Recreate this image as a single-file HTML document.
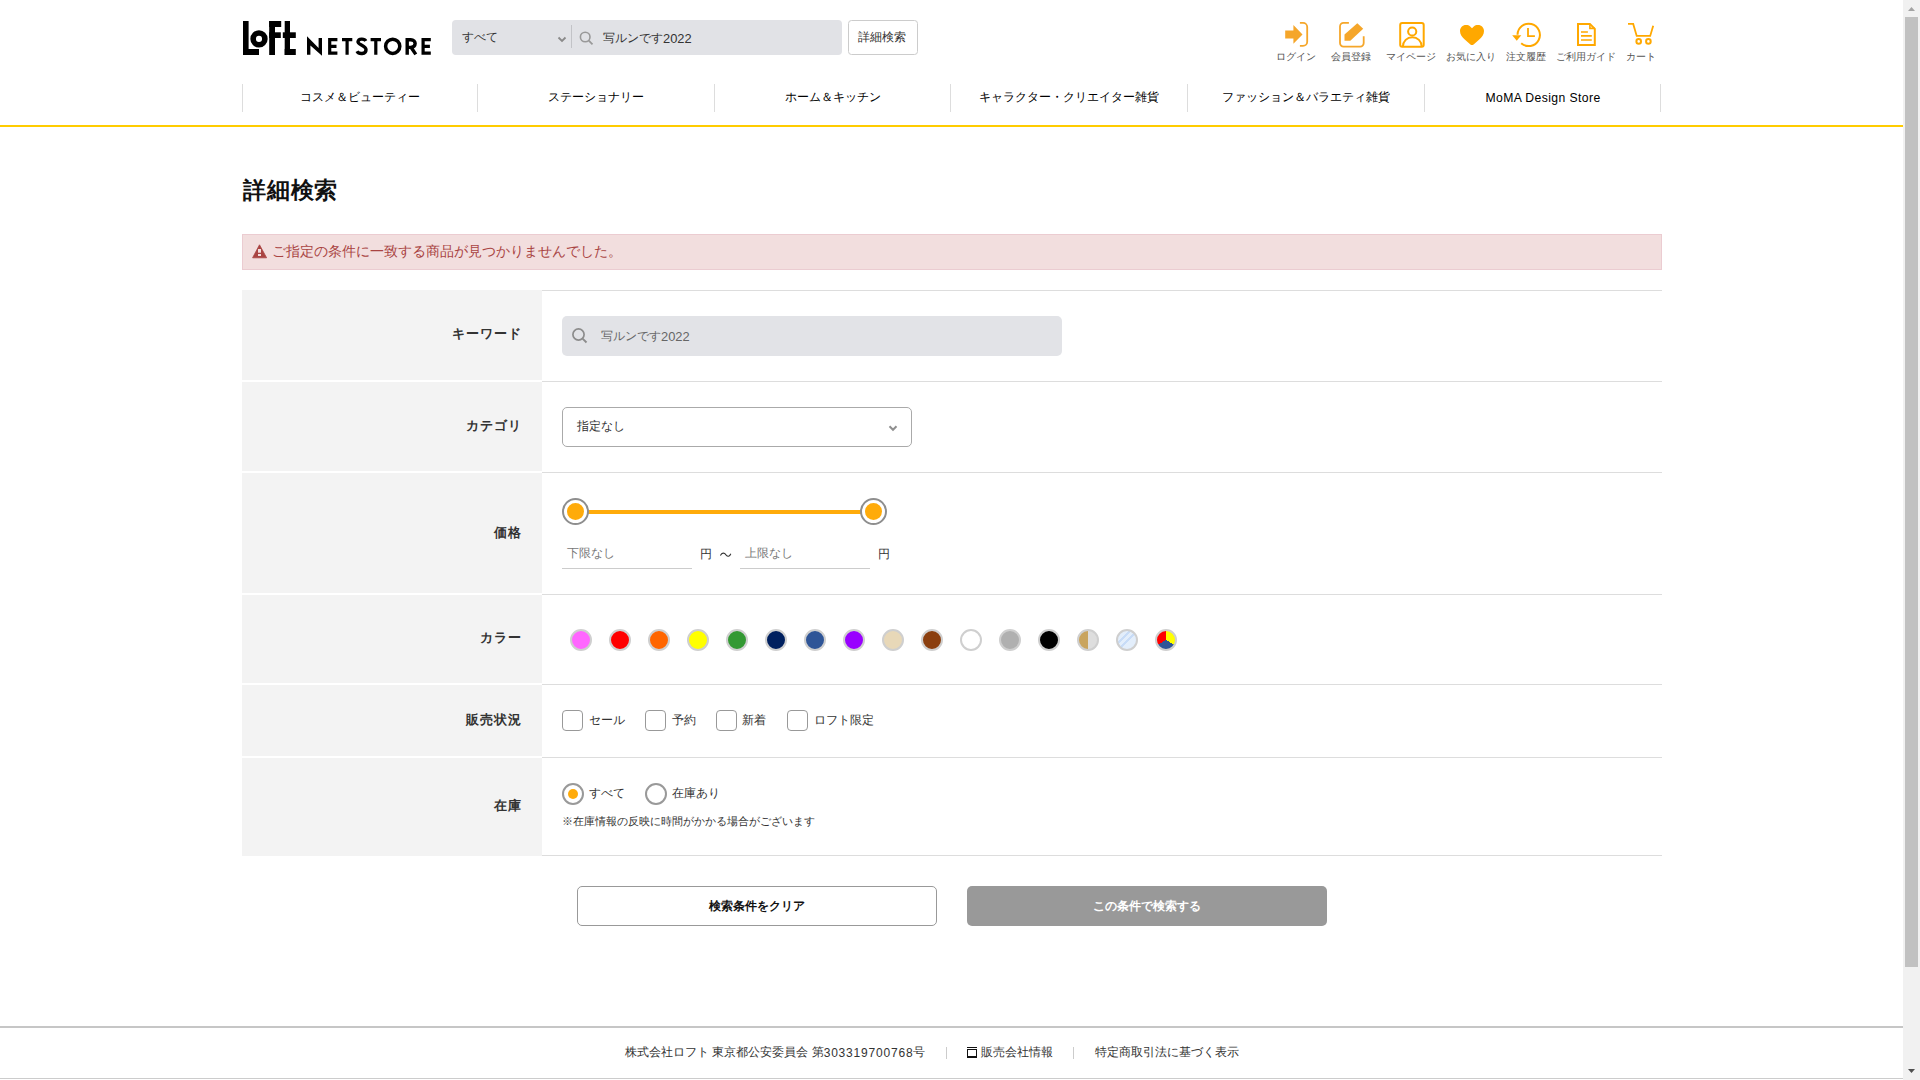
<!DOCTYPE html>
<html lang="ja">
<head>
<meta charset="utf-8">
<style>
*{box-sizing:border-box;margin:0;padding:0}
html,body{width:1920px;height:1080px;overflow:hidden;background:#fff}
body{position:relative;font-family:"Liberation Sans",sans-serif;color:#333}
.a{position:absolute;white-space:nowrap}
.c{text-align:center}
.lbl{position:absolute;left:242px;width:300px;background:#f3f3f3}
.lbl span{position:absolute;right:20px;font-size:13px;letter-spacing:1px;font-weight:bold;color:#333;line-height:14px}
.ln{position:absolute;left:542px;width:1120px;height:1px;background:#ddd}
.sw{position:absolute;top:629px;width:22px;height:22px;border-radius:50%;border:2px solid #cfcfcf}
.cb{position:absolute;top:710px;width:21px;height:21px;border:1px solid #999;border-radius:4px;background:#fff}
.cbl{position:absolute;top:714px;font-size:12px;line-height:12px;color:#333}
.nav{position:absolute;top:84px;width:1px;height:28px;background:#ddd}
.navt{position:absolute;top:91px;width:236px;text-align:center;font-size:12px;line-height:12px;color:#000}
.il{position:absolute;top:52px;width:80px;text-align:center;font-size:10px;line-height:10px;color:#555}
</style>
</head>
<body>

<!-- LOGO -->
<svg class="a" style="left:0;top:0" width="1920" height="130" viewBox="0 0 1920 130">
  <g fill="#000">
    <rect x="243" y="21" width="5.6" height="34"/>
    <rect x="243" y="49" width="16" height="6"/>
    <circle cx="259" cy="38.9" r="5.85" fill="none" stroke="#000" stroke-width="5.6"/>
    <rect x="269.2" y="21" width="5.8" height="34"/>
    <rect x="269.2" y="21" width="12" height="6"/>
    <rect x="269.2" y="32.3" width="11.6" height="5.7"/>
    <rect x="284.7" y="21" width="5.3" height="34"/>
    <rect x="282.8" y="32.3" width="13" height="5.7"/>
    <rect x="284.7" y="49" width="11.1" height="6"/>
  </g>
  <g fill="none" stroke="#000" stroke-width="3.6">
    <!-- N -->
    <path d="M307 36.2 L318.6 47.9 V38.1 H322 V55.8 L310.4 45.5 V54.7 H307 Z" fill="#000" stroke="none"/>
    <!-- E -->
    <path d="M337.4 39.7 H329.7 V53.1 H337.4 M329.7 46.3 H336.5" stroke-width="3.2"/>
    <!-- T -->
    <path d="M342 39.7 H352.3 M347.1 39.7 V54.8" stroke-width="3.2"/>
    <!-- S -->
    <path d="M365.8 41 C364.5 38.5 358.5 38.2 358 41.8 C357.6 45 366 45.2 366 49.8 C366 54.5 358.8 54.5 357 51.2" stroke-width="3.4"/>
    <!-- T -->
    <path d="M370.6 39.7 H381 M375.8 39.7 V54.8" stroke-width="3.2"/>
    <!-- O -->
    <circle cx="392.7" cy="46.3" r="7.1" stroke-width="3.5"/>
    <!-- R -->
    <path d="M407.2 54.8 V39.8 H410.8 C416.6 39.8 416.6 47.4 410.8 47.4 H408.5 M411 47.2 L415.8 54.4" stroke-width="3.4"/>
    <!-- E -->
    <path d="M430.8 39.7 H423.1 V53.1 H430.8 M423.1 46.3 H429.9" stroke-width="3.2"/>
  </g>

  <!-- search box -->
  <rect x="452" y="20" width="390" height="35" rx="4" fill="#e1e2e6"/>
  <line x1="571.5" y1="25" x2="571.5" y2="48" stroke="#c2c3c7" stroke-width="1"/>
  <path d="M558.5 37.5 L562 41 L565.5 37.5" fill="none" stroke="#8a8a8a" stroke-width="1.8"/>
  <circle cx="585.2" cy="37" r="4.8" fill="none" stroke="#999" stroke-width="1.6"/>
  <path d="M588.8 40.6 L592.5 44.3" stroke="#999" stroke-width="1.8"/>
  <rect x="848.5" y="20.5" width="69" height="34" rx="3" fill="#fff" stroke="#ccc"/>

  <!-- icons -->
  <g fill="#f5a62a">
    <path d="M1285.2 30.4 H1293.4 V25 L1302.5 34.4 L1293.4 43.8 V38.4 H1285.2 Z"/>
  </g>
  <path d="M1299.9 22.9 H1303 A4.2 4.2 0 0 1 1307.2 27.1 V41.7 A4.2 4.2 0 0 1 1303 45.9 H1299.9" fill="none" stroke="#f5a62a" stroke-width="1.8"/>
  <path d="M1348.9 22.9 H1343.5 A3.5 3.5 0 0 0 1340 26.4 V43.1 A3.5 3.5 0 0 0 1343.5 46.6 H1360.2 A3.5 3.5 0 0 0 1363.7 43.1 V36.3" fill="none" stroke="#f5a62a" stroke-width="1.8"/>
  <path d="M1344.5 34.4 L1357.3 23.2 L1363.2 28.8 L1350.3 40.7 H1344.5 Z" fill="#f5a62a"/>
  <g fill="none" stroke="#ffa800" stroke-width="2">
    <rect x="1400.2" y="23" width="23.5" height="23.7" rx="2"/>
    <circle cx="1412.2" cy="31.5" r="4.1"/>
    <path d="M1402.9 46.5 A9.4 9.4 0 0 1 1421.7 46.5"/>
  </g>
  <path d="M1472 28.3 C1470 25.4 1468 24.9 1466 24.9 C1462.5 24.9 1460 27.5 1460 31 C1460 34.5 1462 37 1465 39.8 L1470.4 44.4 Q1472 45.7 1473.6 44.4 L1479 39.8 C1482 37 1484 34.5 1484 31 C1484 27.5 1481.5 24.9 1478 24.9 C1476 24.9 1474 25.4 1472 28.3 Z" fill="#ffa800"/>
  <g fill="none" stroke="#ffa800" stroke-width="2">
    <path d="M1517.5 34.8 A11.2 11.2 0 1 1 1521.2 43.2"/>
    <path d="M1528 28.1 V36.2 H1534.9" stroke-width="1.8"/>
  </g>
  <path d="M1512.2 35.3 H1521.3 L1516.75 40.8 Z" fill="#ffa800"/>
  <g fill="none" stroke="#ffa800" stroke-width="2">
    <path d="M1578 23.9 H1589.9 L1594.8 28.8 V45 H1578 Z"/>
    <path d="M1589.9 23.9 V28.4 H1594.8" stroke-width="1.6"/>
    <path d="M1581 32 H1587.9 M1581 35.9 H1591.8 M1581 40 H1591.8" stroke-width="1.7"/>
  </g>
  <g fill="none" stroke="#ffa800" stroke-width="1.8">
    <path d="M1628 23.9 H1633.2 L1636.7 35.9 H1650.2 L1653.2 25.7"/>
    <circle cx="1638.7" cy="41.4" r="2.3" stroke-width="2"/>
    <circle cx="1648.4" cy="41.4" r="2.3" stroke-width="2"/>
  </g>
  <!-- yellow line -->
  <rect x="0" y="125" width="1903" height="2" fill="#ffcc00"/>
</svg>

<div class="a" style="left:462px;top:31px;font-size:12px;line-height:12px;color:#333">すべて</div>
<div class="a" style="left:603px;top:31px;font-size:12.3px;line-height:13px;color:#333">写ルンです<span style="position:relative;top:1px;font-size:12.9px">2022</span></div>
<div class="a" style="left:858px;top:31px;font-size:12px;line-height:12px;color:#333">詳細検索</div>

<div class="il" style="left:1256px">ログイン</div>
<div class="il" style="left:1311px">会員登録</div>
<div class="il" style="left:1371px">マイページ</div>
<div class="il" style="left:1431px">お気に入り</div>
<div class="il" style="left:1486px">注文履歴</div>
<div class="il" style="left:1546px">ご利用ガイド</div>
<div class="il" style="left:1601px">カート</div>

<!-- NAV -->
<div class="nav" style="left:242px"></div>
<div class="nav" style="left:477px"></div>
<div class="nav" style="left:714px"></div>
<div class="nav" style="left:950px"></div>
<div class="nav" style="left:1187px"></div>
<div class="nav" style="left:1424px"></div>
<div class="nav" style="left:1660px"></div>
<div class="navt" style="left:242px">コスメ＆ビューティー</div>
<div class="navt" style="left:478px">ステーショナリー</div>
<div class="navt" style="left:715px">ホーム＆キッチン</div>
<div class="navt" style="left:951px">キャラクター・クリエイター雑貨</div>
<div class="navt" style="left:1188px">ファッション＆バラエティ雑貨</div>
<div class="navt" style="left:1425px;top:92px;font-size:12.2px;letter-spacing:0.4px">MoMA Design Store</div>

<!-- TITLE -->
<div class="a" style="left:243px;top:178px;font-size:23px;letter-spacing:0.8px;line-height:24px;font-weight:bold;color:#111">詳細検索</div>

<!-- ALERT -->
<div class="a" style="left:242px;top:234px;width:1420px;height:36px;background:#f2dede;border:1px solid #ebccd1"></div>
<svg class="a" style="left:252px;top:244px" width="16" height="15" viewBox="0 0 16 15">
  <path d="M7.5 0.8 L14.6 13.8 H0.6 Z" fill="#a94442" stroke="#a94442" stroke-width="0.8" stroke-linejoin="round"/>
  <rect x="6" y="5" width="3" height="3.7" fill="#f2dede"/>
  <rect x="6" y="10" width="3" height="2" fill="#f2dede"/>
</svg>
<div class="a" style="left:272px;top:244px;font-size:14px;line-height:14px;color:#a94442">ご指定の条件に一致する商品が見つかりませんでした。</div>

<!-- TABLE -->
<div class="lbl" style="top:290px;height:90px"><span style="top:37px">キーワード</span></div>
<div class="lbl" style="top:382px;height:89px"><span style="top:37px">カテゴリ</span></div>
<div class="lbl" style="top:473px;height:120px"><span style="top:53px">価格</span></div>
<div class="lbl" style="top:595px;height:88px"><span style="top:36px">カラー</span></div>
<div class="lbl" style="top:685px;height:71px"><span style="top:28px">販売状況</span></div>
<div class="lbl" style="top:758px;height:98px"><span style="top:41px">在庫</span></div>
<div class="ln" style="top:290px"></div>
<div class="ln" style="top:381px"></div>
<div class="ln" style="top:472px"></div>
<div class="ln" style="top:594px"></div>
<div class="ln" style="top:684px"></div>
<div class="ln" style="top:757px"></div>
<div class="ln" style="top:855px"></div>

<!-- keyword input -->
<div class="a" style="left:562px;top:316px;width:500px;height:40px;border-radius:5px;background:#e2e3e7"></div>
<svg class="a" style="left:570px;top:326px" width="20" height="20" viewBox="0 0 20 20">
  <circle cx="8.5" cy="8.5" r="5.6" fill="none" stroke="#8c8c8c" stroke-width="1.7"/>
  <path d="M12.6 12.6 L16.5 16.5" stroke="#8c8c8c" stroke-width="1.9"/>
</svg>
<div class="a" style="left:601px;top:329px;font-size:12.3px;line-height:13px;color:#666">写ルンです<span style="position:relative;top:1px;font-size:12.9px">2022</span></div>

<!-- category select -->
<div class="a" style="left:562px;top:407px;width:350px;height:40px;border-radius:5px;border:1px solid #aaa;background:#fff"></div>
<div class="a" style="left:577px;top:420px;font-size:12px;line-height:12px;color:#333">指定なし</div>
<svg class="a" style="left:886px;top:423px" width="12" height="10" viewBox="0 0 12 10">
  <path d="M3.5 3.3 L7 6.8 L10.5 3.3" fill="none" stroke="#8f8f8f" stroke-width="2"/>
</svg>

<!-- price slider -->
<div class="a" style="left:588px;top:510px;width:273px;height:4px;background:#ffab0a"></div>
<div class="a" style="left:562px;top:498px;width:27px;height:27px;border-radius:50%;border:2px solid #8e8e8e;background:#fff"></div>
<div class="a" style="left:567px;top:503px;width:17px;height:17px;border-radius:50%;background:#ffab0a"></div>
<div class="a" style="left:860px;top:498px;width:27px;height:27px;border-radius:50%;border:2px solid #8e8e8e;background:#fff"></div>
<div class="a" style="left:865px;top:503px;width:17px;height:17px;border-radius:50%;background:#ffab0a"></div>
<div class="a" style="left:562px;top:568px;width:130px;height:1px;background:#ccc"></div>
<div class="a" style="left:740px;top:568px;width:130px;height:1px;background:#ccc"></div>
<div class="a" style="left:567px;top:547px;font-size:12px;line-height:12px;color:#777">下限なし</div>
<div class="a" style="left:700px;top:548px;font-size:12px;line-height:12px;color:#333">円</div>
<svg class="a" style="left:716px;top:548px" width="18" height="12" viewBox="716 548 18 12"><path d="M720.4 555.4 C722 552.6 724.2 552.4 726 554.8 C727.6 556.8 729.6 556.8 730.8 553.8" fill="none" stroke="#333" stroke-width="1.1"/></svg>
<div class="a" style="left:745px;top:547px;font-size:12px;line-height:12px;color:#777">上限なし</div>
<div class="a" style="left:878px;top:548px;font-size:12px;line-height:12px;color:#333">円</div>

<!-- colors -->
<div class="sw" style="left:570px;background:#ff66ff"></div>
<div class="sw" style="left:609px;background:#ff0000"></div>
<div class="sw" style="left:648px;background:#ff6600"></div>
<div class="sw" style="left:687px;background:#ffff00"></div>
<div class="sw" style="left:726px;background:#339933"></div>
<div class="sw" style="left:765px;background:#00205f"></div>
<div class="sw" style="left:804px;background:#2f5597"></div>
<div class="sw" style="left:843px;background:#9900ff"></div>
<div class="sw" style="left:882px;background:#e8d8b8"></div>
<div class="sw" style="left:921px;background:#8b3f0f"></div>
<div class="sw" style="left:960px;background:#ffffff"></div>
<div class="sw" style="left:999px;background:#b0b0b0"></div>
<div class="sw" style="left:1038px;background:#000000"></div>
<div class="sw" style="left:1077px;background:linear-gradient(90deg,#c9a45e 50%,#dedede 50%)"></div>
<div class="sw" style="left:1116px;background:linear-gradient(135deg,#e3eefb 0%,#e3eefb 30%,#c8dcf7 30%,#c8dcf7 38%,#e3eefb 38%,#e3eefb 48%,#c8dcf7 48%,#c8dcf7 56%,#e3eefb 56%)"></div>
<div class="sw" style="left:1155px;background:conic-gradient(#ffff00 0deg 119deg,#2f5597 121deg 239deg,#ff0000 241deg 359deg,#ffff00 360deg)"></div>

<!-- checkboxes -->
<div class="cb" style="left:562px"></div><div class="cbl" style="left:589px">セール</div>
<div class="cb" style="left:645px"></div><div class="cbl" style="left:672px">予約</div>
<div class="cb" style="left:716px"></div><div class="cbl" style="left:742px">新着</div>
<div class="cb" style="left:787px"></div><div class="cbl" style="left:814px">ロフト限定</div>

<!-- radios -->
<div class="a" style="left:562px;top:783px;width:22px;height:22px;border-radius:50%;border:2px solid #999;background:#fff"></div>
<div class="a" style="left:568px;top:789px;width:10px;height:10px;border-radius:50%;background:#ffab0a"></div>
<div class="a" style="left:589px;top:787px;font-size:12px;line-height:12px;color:#333">すべて</div>
<div class="a" style="left:645px;top:783px;width:22px;height:22px;border-radius:50%;border:2px solid #999;background:#fff"></div>
<div class="a" style="left:672px;top:787px;font-size:12px;line-height:12px;color:#333">在庫あり</div>
<div class="a" style="left:562px;top:816px;font-size:11px;line-height:11px;color:#333">※在庫情報の反映に時間がかかる場合がございます</div>

<!-- buttons -->
<div class="a c" style="left:577px;top:886px;width:360px;height:40px;border:1px solid #999;border-radius:5px;background:#fff;font-size:12px;font-weight:bold;line-height:38px;color:#111">検索条件をクリア</div>
<div class="a c" style="left:967px;top:886px;width:360px;height:40px;border-radius:5px;background:#999;font-size:12px;font-weight:bold;line-height:40px;color:#fff">この条件で検索する</div>

<!-- footer -->
<div class="a" style="left:0;top:1026px;width:1903px;height:2px;background:#c6c6c6"></div>
<div class="a" style="left:0;top:1078px;width:1903px;height:1px;background:#ccc"></div>
<div class="a" style="left:625px;top:1046px;font-size:12px;line-height:12px;color:#333">株式会社ロフト 東京都公安委員会 第<span style="letter-spacing:0.8px;position:relative;top:1px">303319700768</span>号</div>
<div class="a" style="left:946px;top:1047px;width:1px;height:12px;background:#ccc"></div>
<div class="a" style="left:967px;top:1047px;width:10px;height:1px;background:#111"></div><div class="a" style="left:967px;top:1049px;width:10px;height:9px;border:1px solid #111;border-bottom-width:2px"></div>
<div class="a" style="left:981px;top:1046px;font-size:12px;line-height:12px;color:#333">販売会社情報</div>
<div class="a" style="left:1073px;top:1047px;width:1px;height:12px;background:#ccc"></div>
<div class="a" style="left:1095px;top:1046px;font-size:12px;line-height:12px;color:#333">特定商取引法に基づく表示</div>

<!-- scrollbar -->
<div class="a" style="left:1903px;top:0;width:17px;height:1080px;background:#f1f1f1"></div>
<div class="a" style="left:1905px;top:17px;width:13px;height:950px;background:#c1c1c1"></div>
<svg class="a" style="left:1903px;top:0" width="17" height="1080" viewBox="0 0 17 1080">
  <path d="M5 11 L8.5 7 L12 11 Z" fill="#a3a3a3"/>
  <path d="M5 1069 L8.5 1073 L12 1069 Z" fill="#505050"/>
</svg>

</body>
</html>
